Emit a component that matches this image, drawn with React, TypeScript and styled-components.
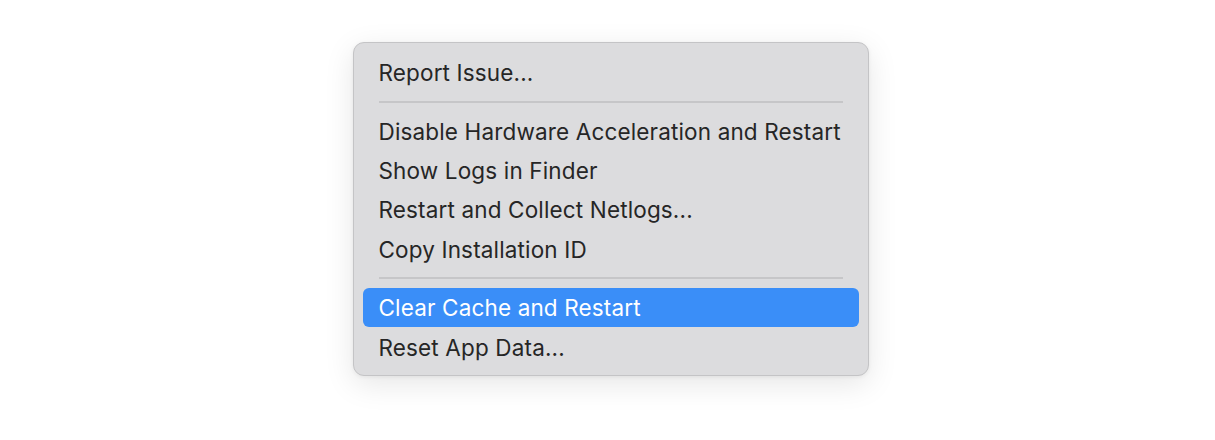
import React from 'react';
import styled, { createGlobalStyle } from 'styled-components';

const menuItems: (string | null)[] = [
  'Report Issue...',
  null,
  'Disable Hardware Acceleration and Restart',
  'Show Logs in Finder',
  'Restart and Collect Netlogs...',
  'Copy Installation ID',
  null,
  'Clear Cache and Restart',
  'Reset App Data...',
];

const activeItem = 'Clear Cache and Restart';

const GlobalStyle = createGlobalStyle`
  html, body {
    margin: 0;
    padding: 0;
    background: #ffffff;
  }
`;

const Page = styled.div`
  width: 1215px;
  height: 440px;
  display: flex;
  justify-content: center;
  align-items: flex-start;
  padding-top: 42px;
  box-sizing: border-box;
  font-family: Inter, 'Noto Sans', sans-serif;
`;

const Menu = styled.div`
  width: 516px;
  box-sizing: border-box;
  padding: 10px 9px 8px 9px;
  background: #dcdcde;
  border: 1px solid #c4c4c6;
  border-radius: 11px;
  box-shadow: 0 8px 30px rgba(0, 0, 0, 0.10), 0 1px 4px rgba(0, 0, 0, 0.06);
  display: flex;
  flex-direction: column;
  margin-left: 6px;
`;

const Item = styled.div<{ $active?: boolean }>`
  height: 39.3px;
  display: flex;
  align-items: center;
  padding: 0 16px;
  border-radius: 6px;
  font-size: 22.5px;
  letter-spacing: 0.15px;
  color: ${p => (p.$active ? '#ffffff' : '#262626')};
  background: ${p => (p.$active ? '#3a8ef8' : 'transparent')};
  white-space: nowrap;
`;

const Separator = styled.div`
  height: 19.3px;
  display: flex;
  align-items: center;
  padding: 0 16px;

  &::after {
    content: '';
    flex: 1;
    height: 2px;
    background: #c6c6c8;
  }
`;

const App = () => {
  return (
    <Page>
      <GlobalStyle />
      <Menu>
        {menuItems.map((text, index) =>
          text === null ? (
            <Separator key={index} />
          ) : (
            <Item key={index} $active={text === activeItem}>
              {text}
            </Item>
          )
        )}
      </Menu>
    </Page>
  );
};

export default App;
